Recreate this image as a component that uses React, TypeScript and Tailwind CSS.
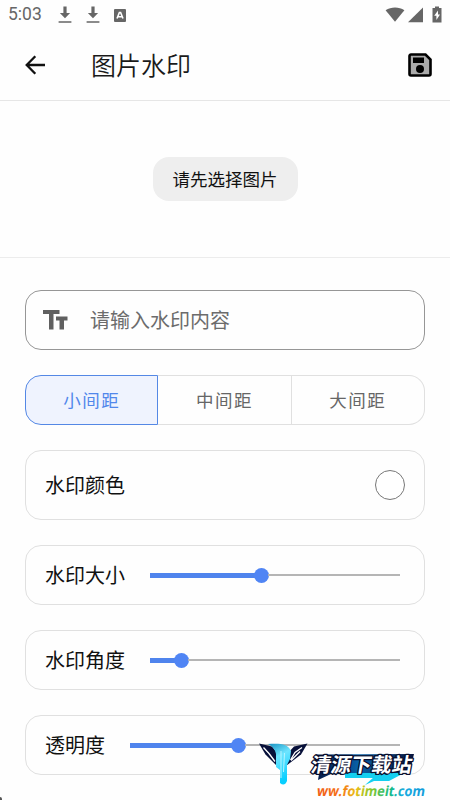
import React, { useState } from "react";

interface SliderRowProps {
  label: string;
  value: number;
}

const spacings: string[] = ["小间距", "中间距", "大间距"];

const StatusBar = () => (
  <div className="flex h-[30px] items-center justify-between pl-2 pr-[8px] text-[#666666]">
    <div className="flex items-center">
      <span className="w-[50px] font-[Roboto] text-[17.5px] leading-none">5:03</span>
      {[0, 1].map((item) => (
        <svg key={item} className="mr-[13.5px] h-[18px] w-[14px]" viewBox="0 0 14 18" fill="currentColor">
          <path d="M5.4 0.500h3.200v6.500h3.500L7 12.300 1.900 7h3.500zM.6 15.200h12.800v1.600H.6z" />
        </svg>
      ))}
      <svg className="ml-[1px] h-[13px] w-[12px]" viewBox="0 0 12 13">
        <rect width="12" height="13" rx="1" fill="currentColor" />
        <path d="M3 9.5 5.4 3.500h1.2L9 9.500M4 7.800h4" fill="none" stroke="#fff" strokeWidth="1.6" />
      </svg>
    </div>
    <svg className="h-[18px] w-[57px]" viewBox="0 0 57 18" fill="currentColor">
      <path d="M.6 4.2C6.2.6 14 .6 19.4 4.2L10 15.800z" />
      <path d="M23 16.2 38 1.500v14.700z" />
      <path d="M50 .5h4v1.500h2.500V16.500H47.500V2H50z" />
      <path d="M53 4.500 49.200 9.700h2.200v4.300L55 8.500h-2z" fill="#fff" />
    </svg>
  </div>
);

const Header = () => (
  <header className="flex h-[71px] items-center border-b border-[#e6e6e6] pl-[25px] pr-[18px]">
    <svg className="h-5 w-5" viewBox="0 0 20 20" fill="none" stroke="#111" strokeWidth="2.300">
      <path d="M20 10H2M10.300 1.200 1.700 10l8.600 8.800" />
    </svg>
    <h1 className="mb-[2px] ml-[46px] flex-1 text-[25px] font-[350] leading-none text-[#1a1a1a]">图片水印</h1>
    <svg className="h-6 w-6" viewBox="0 0 24 24">
      <path
        d="M3 1.500h14.500l5 5V21a1.500 1.500 0 0 1-1.500 1.500H3A1.500 1.500 0 0 1 1.500 21V3A1.500 1.500 0 0 1 3 1.500z"
        fill="#aaa"
        stroke="#000"
        strokeWidth="2.600"
      />
      <path d="M5 4.500h11V10H5z" />
      <circle cx="12" cy="16" r="4" />
    </svg>
  </header>
);

const SliderRow = ({ label, value }: SliderRowProps) => (
  <div className="flex h-[60px] items-center gap-[25px] rounded-[16px] border border-[#e0e0e0] pl-[19px] pr-[24px]">
    <span className="text-xl leading-none">{label}</span>
    <div className="flex flex-1 items-center">
      <div className="h-[5px] bg-[#4f84ed]" style={{ width: `${value}%` }}></div>
      <div className="-mx-[7.5px] size-[15px] shrink-0 rounded-full bg-[#5085f4]"></div>
      <div className="ml-[7px] h-[1.500px] flex-1 bg-[#b5b5b5]"></div>
    </div>
  </div>
);

const SiteLogo = () => (
  <svg className="absolute left-[255px] top-[735px] h-[65px] w-[195px]" viewBox="0 0 195 65">
    <defs>
      <linearGradient id="beam" x1="0" y1="0" x2="0.300" y2="1">
        <stop offset="0" stopColor="#168fc0" />
        <stop offset="0.400" stopColor="#6de5ff" />
        <stop offset="1" stopColor="#08cfff" />
      </linearGradient>
      <linearGradient id="plate">
        <stop offset="0" stopColor="#05133d" />
        <stop offset="0.450" stopColor="#0860a7" />
        <stop offset="1" stopColor="#07133b" />
      </linearGradient>
      <linearGradient id="url">
        <stop offset="0" stopColor="#f05a16" />
        <stop offset="0.220" stopColor="#f5721a" />
        <stop offset="0.360" stopColor="#ebbd18" />
        <stop offset="0.500" stopColor="#87c72e" />
        <stop offset="0.680" stopColor="#17ba85" />
        <stop offset="0.800" stopColor="#1aaae0" />
        <stop offset="1" stopColor="#159bd9" />
      </linearGradient>
    </defs>

    {/* wings */}
    <path d="M4 8.500 17 11.500l5 6V31L10.500 19.500z" fill="#071039" />
    <path d="m8.500 12.500 5.500 6 6 8" fill="none" stroke="#fff" strokeWidth="1.300" />
    <path d="M52.500 8.500 39 11.500l-5.500 6-2 13L46 19.500z" fill="#071039" />
    <path d="m47 12.500-7 5-4.500 7.500M45 16.500l-9 9" fill="none" stroke="#fff" strokeWidth="1.300" />

    {/* beam between the wings */}
    <path
      d="M13 9c13-.8 20 0 23 7L35 24l-3 6v16q-2.500 6-7 2V35l-4-3V19C20 14 17 11 13 9z"
      fill="url(#beam)"
    />
    <path d="M26 16v27M29.500 18l-1 19" stroke="#b6f5ff" strokeWidth="1" />

    {/* site name */}
    <path d="m61 19.500 98-.5-5 20H76l-13 6 1-6h-6z" fill="url(#plate)" />
    <path d="M90 38h58l-22 8-3-3H90zM151 37l-17 9h-15l-9 4 9-8z" fill="#15cff0" />
    <text
      transform="skewX(-10)"
      x="61.500"
      y="37.500"
      textLength="101"
      lengthAdjust="spacingAndGlyphs"
      className="text-[20px] font-bold"
      fill="#fff"
      stroke="#080e2d"
      strokeWidth="2.600"
      strokeLinejoin="round"
      paintOrder="stroke"
    >
      清源下载站
    </text>
    <text
      transform="skewX(-10)"
      x="72"
      y="61"
      textLength="108"
      lengthAdjust="spacingAndGlyphs"
      className="font-['Open_Sans'] text-[14px] font-bold"
      fill="url(#url)"
    >
      ww.fotimeit.com
    </text>
  </svg>
);

const App = () => {
  const [spacing, setSpacing] = useState<number>(0);

  return (
    <div className="relative h-[800px] w-[450px] overflow-hidden bg-[#fefefe] font-['Noto_Sans_CJK_SC',sans-serif] text-[#111]">
      <StatusBar />
      <Header />

      {/* Image picker */}
      <section className="flex h-[157px] items-center justify-center border-b border-[#ececec]">
        <button className="h-[44px] w-[145px] rounded-[16px] bg-[#eeeeee] text-[17.500px] leading-none">
          请先选择图片
        </button>
      </section>

      {/* Watermark settings */}
      <main className="flex flex-col gap-[25px] px-[25px] pt-[32px]">
        <div className="flex h-[60px] items-center rounded-[16px] border border-[#969696] pl-[17px]">
          <svg className="h-5 w-[25px]" viewBox="0 0 25 20" fill="#606060">
            <path d="M0 0h16.500v4H10.500v15.500H6V4H0zM13 6.500h11.500v4H21v9h-4.500v-9H13z" />
          </svg>
          <input
            className="mb-[2px] ml-[22px] w-[300px] text-xl leading-none outline-none placeholder:text-[#6c6c6c]"
            placeholder="请输入水印内容"
          />
        </div>

        <div className="grid h-[50px] grid-cols-3">
          {spacings.map((name, index) => (
            <button
              key={name}
              onClick={() => setSpacing(index)}
              className={`border text-[17.500px] leading-none tracking-[1.500px] first:rounded-l-[16px] last:rounded-r-[16px] ${
                spacing === index
                  ? "border-[#5488e5] bg-[#eff3fe] text-[#5187eb]"
                  : "border-l-0 border-[#e0e0e0] text-[#666]"
              }`}
            >
              {name}
            </button>
          ))}
        </div>

        <div className="flex h-[70px] items-center justify-between rounded-[16px] border border-[#e0e0e0] px-[19px]">
          <span className="text-xl leading-none">水印颜色</span>
          <div className="size-[30px] rounded-full border border-[#777] bg-white"></div>
        </div>

        <SliderRow label="水印大小" value={44.5} />
        <SliderRow label="水印角度" value={12.5} />
        <SliderRow label="透明度" value={40} />
      </main>

      <SiteLogo />

      {/* rounded screen corner */}
      <div className="absolute bottom-0 left-0 h-[3px] w-[2px] rounded-tr-full bg-[#555]"></div>
    </div>
  );
};

export default App;
